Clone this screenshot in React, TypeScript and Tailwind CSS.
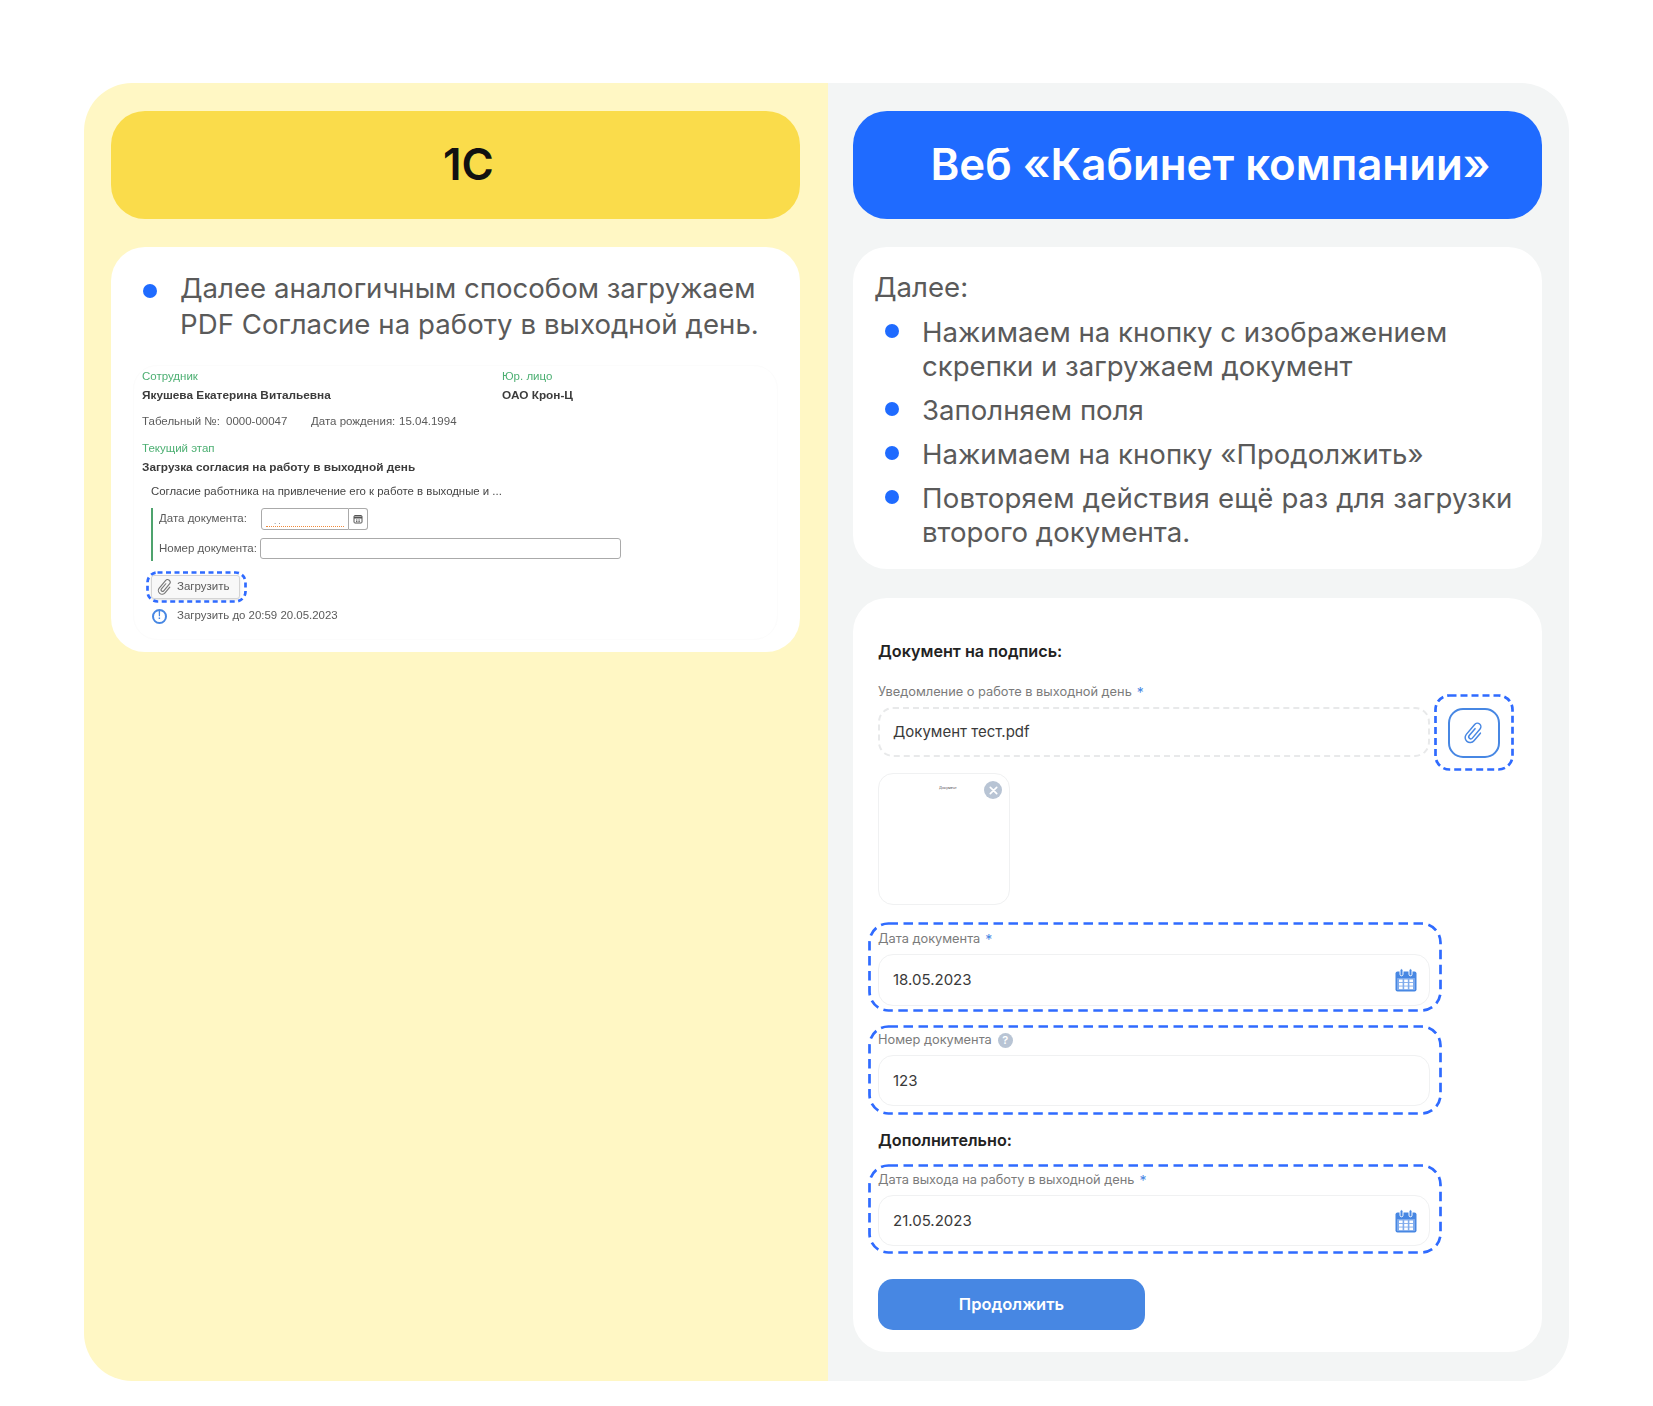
import type { ReactNode } from 'react';

const Bullet = ({ className = '' }: { className?: string }) => (
  <span className={`block w-[14px] h-[14px] rounded-full bg-[#1f6bff] shrink-0 ${className}`} />
);

const Clip = ({ className = '' }: { className?: string }) => (
  <svg viewBox="0 0 24 24" fill="none" stroke="currentColor" strokeWidth="1.5" strokeLinecap="round" strokeLinejoin="round" className={className}>
    <g transform="rotate(40 12 12)">
      <path d="M10 8v9a2 2 0 0 0 4 0V5a3.5 3.5 0 0 0-7 0v13a5 5 0 0 0 10 0V8" />
    </g>
  </svg>
);

const CalendarIcon = () => (
  <svg viewBox="0 0 24 24" className="w-[24px] h-[24px]">
    <rect x="1.5" y="3.5" width="21" height="20" rx="2" fill="#4787e3" />
    <rect x="3" y="10" width="18" height="12" rx="0.5" fill="#7fabec" />
    <rect x="6" y="0.8" width="3" height="7" rx="1.5" fill="#4787e3" stroke="#fff" strokeWidth="1" />
    <rect x="15" y="0.8" width="3" height="7" rx="1.5" fill="#4787e3" stroke="#fff" strokeWidth="1" />
    <g fill="#fff">
      <rect x="5" y="11.5" width="3.6" height="2.6" />
      <rect x="10.2" y="11.5" width="3.6" height="2.6" />
      <rect x="15.4" y="11.5" width="3.6" height="2.6" />
      <rect x="5" y="15" width="3.6" height="2.6" />
      <rect x="10.2" y="15" width="3.6" height="2.6" />
      <rect x="15.4" y="15" width="3.6" height="2.6" />
      <rect x="5" y="18.5" width="3.6" height="2.6" />
      <rect x="10.2" y="18.5" width="3.6" height="2.6" />
      <rect x="15.4" y="18.5" width="3.6" height="2.6" />
    </g>
  </svg>
);

// пунктирная обводка-выделение поверх блока
const DashOutline = ({ radius, dash }: { radius: number; dash: string }) => (
  <svg className="absolute -inset-[3px] w-[calc(100%+6px)] h-[calc(100%+6px)] pointer-events-none overflow-visible">
    <rect
      x="1.5"
      y="1.5"
      style={{ width: 'calc(100% - 3px)', height: 'calc(100% - 3px)' }}
      rx={radius}
      fill="none"
      stroke="#2f6bff"
      strokeWidth="2.7"
      strokeDasharray={dash}
    />
  </svg>
);

const Star = () => <span className="text-[#4787e3] ml-[5px] text-[14px]">*</span>;

const Label = ({ children }: { children: ReactNode }) => (
  <div className="h-[16px] flex items-center text-[12.8px] text-[#7b7b7b] whitespace-nowrap">{children}</div>
);

const ValueBox = ({ value, icon, className = '' }: { value: string; icon?: boolean; className?: string }) => (
  <div className={`mt-[7px] w-[552px] rounded-[15px] border border-[#f0f1f2] bg-white flex items-center justify-between pl-[14px] pr-[11px] text-[15px] text-[#3a3a3a] ${className}`}>
    <span className="pt-px">{value}</span>
    {icon && <CalendarIcon />}
  </div>
);

const DashedBox = ({ children, className = '' }: { children: ReactNode; className?: string }) => (
  <div className={`relative -ml-[10px] w-[574px] border-[3px] border-transparent px-[7px] ${className}`}>
    <DashOutline radius={19} dash="9.5 5.5" />
    {children}
  </div>
);

const OneCScreen = () => (
  <div className="mt-[23px] -ml-[9px] w-[645px] h-[275px] pt-[2px] pl-[8px] border border-[#fcfcfc] rounded-[24px]">
    <div className="font-['Liberation_Sans',Arial,sans-serif] text-[#5a5a5a] text-[11.5px] blur-[0.35px]">
      <div className="grid grid-cols-[360px_1fr] h-[18px] items-center text-[#4caf72]">
        <span>Сотрудник</span>
        <span>Юр. лицо</span>
      </div>
      <div className="grid grid-cols-[360px_1fr] h-[20px] items-center font-bold text-[11.8px] text-[#3c3c3c]">
        <span>Якушева Екатерина Витальевна</span>
        <span>ОАО Крон-Ц</span>
      </div>
      <div className="flex h-[20px] items-center mt-[6px] whitespace-nowrap">
        <span className="w-[84px]">Табельный №:</span>
        <span className="w-[85px]">0000-00047</span>
        <span className="w-[88px]">Дата рождения:</span>
        <span>15.04.1994</span>
      </div>
      <div className="h-[18px] flex items-center mt-[8px] text-[#4caf72]">Текущий этап</div>
      <div className="h-[20px] flex items-center font-bold text-[11.8px] text-[#3c3c3c]">Загрузка согласия на работу в выходной день</div>
      <div className="h-[20px] flex items-center mt-[4px] ml-[9px] text-[11.4px] text-[#444]">Согласие работника на привлечение его к работе в выходные и ...</div>
      <div className="mt-[6px] ml-[9px] h-[53px] border-l-2 border-[#4ea36d] pl-[6px]">
        <div className="flex items-center h-[22px] mt-px">
          <span className="w-[102px]">Дата документа:</span>
          <div className="w-[88px] h-[22px] border border-[#aaa] rounded-l-[3px] px-[4px] flex items-end pb-[2px]">
            <div className="w-full border-b border-dotted border-[#f08a3c] h-[8px] text-[8px] leading-[6px] pl-[8px]">. .</div>
          </div>
          <div className="w-[19px] h-[22px] border border-l-0 border-[#aaa] rounded-r-[3px] flex items-center justify-center text-[#555]">
            <svg viewBox="0 0 10 10" className="w-[10px] h-[10px]" fill="none" stroke="currentColor">
              <rect x="1" y="1.5" width="8" height="7.5" rx="1" />
              <path d="M1 3.5h8" strokeWidth="2" />
              <path d="M3 6h4M3 7.6h4" strokeDasharray="1 0.6" />
            </svg>
          </div>
        </div>
        <div className="flex items-center h-[21px] mt-[8px]">
          <span className="w-[101px]">Номер документа:</span>
          <div className="w-[361px] h-[21px] border border-[#aaa] rounded-[3px]" />
        </div>
      </div>
      <div className="relative mt-[13px] ml-[7px] w-[95px] h-[26px] flex items-center pl-[2px]">
        <DashOutline radius={10} dash="5 3.5" />
        <div className="w-[89px] h-[24px] border border-[#d4d4d4] rounded-[3px] bg-[#f8f8f8] shadow-sm flex items-center pl-[4px] gap-[3px]">
          <Clip className="w-[18px] h-[18px] text-[#777]" />
          <span>Загрузить</span>
        </div>
      </div>
      <div className="mt-[6px] ml-[10px] h-[20px] flex items-center">
        <span className="w-[15px] h-[15px] rounded-full border-2 border-[#4787e3] text-[#4787e3] flex items-center justify-center text-[10px] font-bold leading-none">!</span>
        <span className="ml-[10px] text-[11.45px]">Загрузить до 20:59 20.05.2023</span>
      </div>
    </div>
  </div>
);

export default function App() {
  return (
    <div className="min-h-[1406px] bg-white pt-[83px] font-['Inter',sans-serif]">
      <div className="ml-[84px] w-[1485px] h-[1298px] rounded-[48px] overflow-hidden flex">
        {/* Колонка 1С */}
        <div className="w-[744px] bg-[#fff7c4] pt-[28px] pl-[27px]">
          <div className="w-[689px] h-[108px] rounded-[34px] bg-[#fadc4b] flex items-center justify-center pl-[26px] text-[43.8px] font-semibold text-[#111]">
            1С
          </div>
          <div className="mt-[28px] w-[689px] h-[405px] rounded-[34px] bg-white pt-[23px] pl-[31px]">
            <div className="flex">
              <Bullet className="mt-[14px] ml-px" />
              <p className="ml-[23px] text-[27.6px] leading-[36px] text-[#5a5a5a] whitespace-nowrap">
                Далее аналогичным способом загружаем
                <br />
                <span className="tracking-[0.05px]">PDF Согласие на работу в выходной день.</span>
              </p>
            </div>
            <OneCScreen />
          </div>
        </div>

        {/* Колонка веб-кабинета */}
        <div className="flex-1 bg-[#f3f5f5] pt-[28px] pl-[25px]">
          <div className="w-[689px] h-[108px] rounded-[34px] bg-[#1f6bff] flex items-center justify-center pl-[26px] text-[43.8px] font-semibold text-white whitespace-nowrap">
            Веб «Кабинет компании»
          </div>

          <div className="mt-[28px] w-[689px] h-[322px] rounded-[34px] bg-white pt-[23px] pl-[21px] text-[27.6px] leading-[34px] text-[#5a5a5a]">
            <p>Далее:</p>
            <ul className="mt-[11px] pl-[11px] flex flex-col gap-[10px] whitespace-nowrap">
              <li className="flex">
                <Bullet className="mt-[9px]" />
                <span className="ml-[23px]">
                  Нажимаем на кнопку с изображением
                  <br />
                  скрепки и загружаем документ
                </span>
              </li>
              <li className="flex">
                <Bullet className="mt-[9px]" />
                <span className="ml-[23px]">Заполняем поля</span>
              </li>
              <li className="flex">
                <Bullet className="mt-[9px]" />
                <span className="ml-[23px]">Нажимаем на кнопку «Продолжить»</span>
              </li>
              <li className="flex">
                <Bullet className="mt-[9px]" />
                <span className="ml-[23px]">
                  <span className="tracking-[0.18px]">Повторяем действия ещё раз для загрузки</span>
                  <br />
                  второго документа.
                </span>
              </li>
            </ul>
          </div>

          <div className="mt-[29px] w-[689px] h-[754px] rounded-[34px] bg-white pt-[43px] pl-[25px]">
            <div className="h-[20px] flex items-center text-[16.2px] font-semibold text-[#222]">Документ на подпись:</div>

            <div className="mt-[23px]">
              <Label>
                Уведомление о работе в выходной день
                <Star />
              </Label>
            </div>
            <div className="mt-[7px] flex h-[50px]">
              <div className="w-[552px] h-[50px] rounded-[15px] border-2 border-dashed border-[#e8e9ea] flex items-center pl-[13px] text-[15px] text-[#3a3a3a]">
                Документ тест.pdf
              </div>
              <div className="relative ml-[7px] -mt-[10px] w-[74px] h-[71px] flex items-center justify-center">
                <DashOutline radius={14} dash="7 4" />
                <div className="w-[52px] h-[50px] rounded-[15px] border-2 border-[#4787e3] flex items-center justify-center">
                  <Clip className="w-[24px] h-[24px] text-[#4787e3]" />
                </div>
              </div>
            </div>

            <div className="mt-[16px] relative w-[132px] h-[132px] rounded-[15px] border border-[#f0f1f2]">
              <span className="absolute left-[60px] top-[12px] text-[3.6px] text-[#555]">Документ</span>
              <span className="absolute right-[7px] top-[7px] w-[18px] h-[18px] rounded-full bg-[#b8c4d4] text-white flex items-center justify-center">
                <svg viewBox="0 0 12 12" className="w-[11px] h-[11px]" stroke="currentColor" strokeWidth="1.8" strokeLinecap="round">
                  <path d="M2.5 2.5l7 7M9.5 2.5l-7 7" />
                </svg>
              </span>
            </div>

            <DashedBox className="mt-[17px] h-[90px] pt-[6px]">
              <Label>
                Дата документа
                <Star />
              </Label>
              <ValueBox value="18.05.2023" icon className="h-[52px]" />
            </DashedBox>

            <DashedBox className="mt-[13px] h-[90px] pt-[4px]">
              <Label>
                Номер документа
                <span className="ml-[6px] w-[15px] h-[15px] rounded-full bg-[#b8c4d4] text-white text-[11px] font-semibold flex items-center justify-center">?</span>
              </Label>
              <ValueBox value="123" className="h-[51px]" />
            </DashedBox>

            <div className="mt-[15px] h-[20px] flex items-center text-[16.2px] font-semibold text-[#222]">Дополнительно:</div>

            <DashedBox className="mt-[14px] h-[90px] pt-[5px]">
              <Label>
                Дата выхода на работу в выходной день
                <Star />
              </Label>
              <ValueBox value="21.05.2023" icon className="h-[51px]" />
            </DashedBox>

            <button className="mt-[25px] w-[267px] h-[51px] rounded-[15px] bg-[#4787e3] text-white text-[16.5px] font-semibold">
              Продолжить
            </button>
          </div>
        </div>
      </div>
    </div>
  );
}
